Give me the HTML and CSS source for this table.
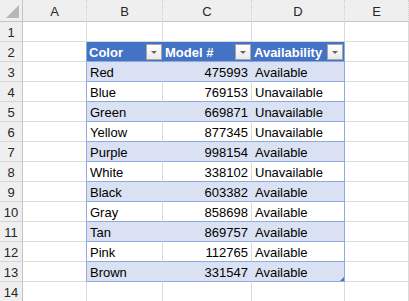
FILE: index.html
```html
<!DOCTYPE html>
<html>
<head>
<meta charset="utf-8">
<link rel="stylesheet" href="styles.css">
</head>
<body>
<div class="sheet">
  <div class="corner"><span class="tri"></span></div>
  <div class="ch">A</div><div class="ch">B</div><div class="ch">C</div><div class="ch">D</div><div class="ch last">E</div>

  <div class="rh">1</div><div class="c"></div><div class="c"></div><div class="c"></div><div class="c"></div><div class="c"></div>

  <div class="rh">2</div><div class="c tl"></div>
  <div class="c th"><span>Color</span><span class="dd"></span></div>
  <div class="c th"><span>Model #</span><span class="dd"></span></div>
  <div class="c th tr"><span>Availability</span><span class="dd"></span></div>
  <div class="c"></div>

  <div class="rh">3</div><div class="c tl"></div><div class="c t band">Red</div><div class="c t band num">475993</div><div class="c t band tr">Available</div><div class="c"></div>
  <div class="rh">4</div><div class="c tl"></div><div class="c t">Blue</div><div class="c t num">769153</div><div class="c t tr">Unavailable</div><div class="c"></div>
  <div class="rh">5</div><div class="c tl"></div><div class="c t band">Green</div><div class="c t band num">669871</div><div class="c t band tr">Unavailable</div><div class="c"></div>
  <div class="rh">6</div><div class="c tl"></div><div class="c t">Yellow</div><div class="c t num">877345</div><div class="c t tr">Unavailable</div><div class="c"></div>
  <div class="rh">7</div><div class="c tl"></div><div class="c t band">Purple</div><div class="c t band num">998154</div><div class="c t band tr">Available</div><div class="c"></div>
  <div class="rh">8</div><div class="c tl"></div><div class="c t">White</div><div class="c t num">338102</div><div class="c t tr">Unavailable</div><div class="c"></div>
  <div class="rh">9</div><div class="c tl"></div><div class="c t band">Black</div><div class="c t band num">603382</div><div class="c t band tr">Available</div><div class="c"></div>
  <div class="rh">10</div><div class="c tl"></div><div class="c t">Gray</div><div class="c t num">858698</div><div class="c t tr">Available</div><div class="c"></div>
  <div class="rh">11</div><div class="c tl"></div><div class="c t band">Tan</div><div class="c t band num">869757</div><div class="c t band tr">Available</div><div class="c"></div>
  <div class="rh">12</div><div class="c tl"></div><div class="c t">Pink</div><div class="c t num">112765</div><div class="c t tr">Available</div><div class="c"></div>
  <div class="rh">13</div><div class="c tl"></div><div class="c t band">Brown</div><div class="c t band num">331547</div><div class="c t band tr end">Available<span class="handle"></span></div><div class="c"></div>

  <div class="rh">14</div><div class="c"></div><div class="c"></div><div class="c"></div><div class="c"></div><div class="c"></div>
</div>
</body>
</html>
```
FILE: styles.css
```css
html, body {
  margin: 0;
  padding: 0;
  background: #ffffff;
}
body {
  font-family: "Liberation Sans", Arial, sans-serif;
  font-size: 13px;
  color: #000;
}
.sheet {
  display: grid;
  grid-template-columns: 23px 64px 76px 89px 93px 64px;
  grid-template-rows: 22px repeat(14, 20px);
  width: 409px;
  height: 301px;
  overflow: hidden;
}
.sheet > div {
  box-sizing: border-box;
}
.corner {
  background: #efefef;
  border-right: 1px solid #c4c4c4;
  border-bottom: 1px solid #c4c4c4;
  display: flex;
  align-items: flex-end;
  justify-content: flex-end;
  padding: 0 3px 3px 0;
}
.tri {
  width: 0;
  height: 0;
  border-left: 13px solid transparent;
  border-bottom: 13px solid #b7b7b7;
}
.ch {
  background: #efefef;
  border-right: 1px dotted #cfcfcf;
  border-bottom: 1px solid #c4c4c4;
  display: flex;
  align-items: center;
  justify-content: center;
  color: #262626;
  padding-top: 2px;
}
.rh {
  background: #efefef;
  border-right: 1px solid #c4c4c4;
  border-bottom: 1px solid #d6d6d6;
  display: flex;
  align-items: center;
  justify-content: center;
  color: #262626;
  padding-top: 1px;
}
.c {
  border-right: 1px solid #dadada;
  border-bottom: 1px solid #dadada;
  display: flex;
  align-items: center;
  padding: 1px 3px 0 3px;
  white-space: nowrap;
}
.tl {
  border-right-color: #8ea9db;
}
.th {
  background: #4472c4;
  color: #fff;
  font-weight: bold;
  border-right-color: #4472c4;
  border-bottom-color: #8ea9db;
  justify-content: space-between;
  padding: 0 0 0 2px;
}
.th span:first-child {
  padding-top: 1px;
}
.th.tr {
  border-right-color: #8ea9db;
  padding-right: 1px;
}
.t {
  border-bottom-color: #8ea9db;
}
.band {
  background: #d9e1f2;
  border-right-color: #d9e1f2;
}
.tr {
  border-right-color: #8ea9db;
}
.num {
  justify-content: flex-end;
}
.dd {
  width: 16px;
  height: 16px;
  box-sizing: border-box;
  border: 1px solid #a6a6a6;
  background: linear-gradient(#ffffff, #e9e9e9);
  display: flex;
  align-items: center;
  justify-content: center;
}
.dd::after {
  content: "";
  width: 0;
  height: 0;
  margin-top: 2px;
  border-left: 3px solid transparent;
  border-right: 3px solid transparent;
  border-top: 3px solid #666666;
}
.end {
  position: relative;
}
.handle {
  position: absolute;
  right: 0;
  bottom: 0;
  width: 0;
  height: 0;
  border-left: 4px solid transparent;
  border-bottom: 4px solid #4472c4;
}
```
